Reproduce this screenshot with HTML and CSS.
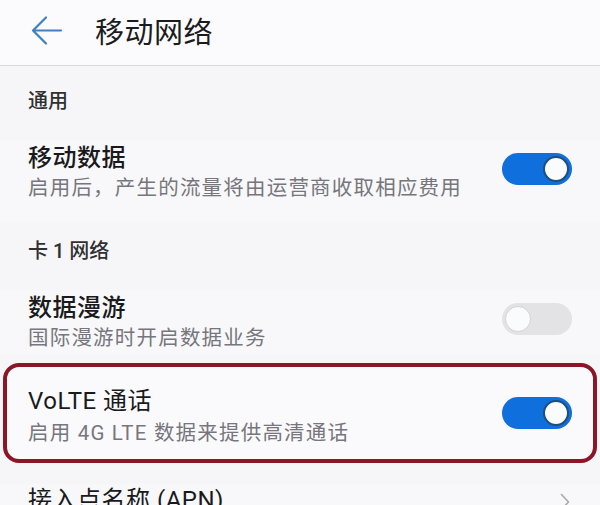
FILE: index.html
```html
<!DOCTYPE html>
<html lang="zh-CN">
<head>
<meta charset="utf-8">
<title>移动网络</title>
<link rel="stylesheet" href="styles.css">
</head>
<body>
<header class="header">
  <svg class="back" width="32" height="32" viewBox="0 0 32 32" aria-hidden="true">
    <path d="M30 15.5H2.5M15 2.5L2 15.5L15 28.5" fill="none" stroke="#3f7fc4" stroke-width="2.2" stroke-linecap="round" stroke-linejoin="round"/>
  </svg>
  <h1 class="title">移动网络</h1>
</header>
<main class="list">
  <div class="label label-first">通用</div>
  <div class="item item-first">
    <div class="texts">
      <div class="item-title">移动数据</div>
      <div class="item-sub">启用后，产生的流量将由运营商收取相应费用</div>
    </div>
    <span class="toggle on"><span class="knob"></span></span>
  </div>
  <div class="label label-second">卡 1 网络</div>
  <div class="item">
    <div class="texts">
      <div class="item-title">数据漫游</div>
      <div class="item-sub">国际漫游时开启数据业务</div>
    </div>
    <span class="toggle off"><span class="knob"></span></span>
  </div>
  <div class="item highlight">
    <div class="texts">
      <div class="item-title latin">VoLTE 通话</div>
      <div class="item-sub">启用 4G LTE 数据来提供高清通话</div>
    </div>
    <span class="toggle on"><span class="knob"></span></span>
  </div>
  <div class="item apn">
    <div class="item-title latin">接入点名称 (APN)</div>
    <svg class="chev" width="10" height="18" viewBox="0 0 10 18" aria-hidden="true">
      <path d="M1.5 1.5L8.5 9L1.5 16.5" fill="none" stroke="#a9a9ad" stroke-width="1.6" stroke-linecap="round" stroke-linejoin="round"/>
    </svg>
  </div>
</main>
</body>
</html>
```
FILE: styles.css
```css
html, body {
  margin: 0;
  padding: 0;
}
body {
  width: 600px;
  height: 505px;
  overflow: hidden;
  background: #f6f6f8;
  font-family: Roboto, "Noto Sans CJK SC", sans-serif;
  color: #1b1b1d;
}
.header {
  height: 66px;
  box-sizing: border-box;
  background: #fbfbfd;
  border-bottom: 1px solid #d9d9dc;
  display: flex;
  align-items: center;
  padding-left: 31px;
}
.back {
  display: block;
  margin-top: -4px;
}
.title {
  margin: 0 0 0 32px;
  font-size: 29px;
  font-weight: 400;
  letter-spacing: 0.5px;
  line-height: 40px;
  margin-top: -6px;
  color: #1c1c1e;
  font-family: "Noto Sans CJK SC", sans-serif;
}
.list {
  display: flex;
  flex-direction: column;
}
.label {
  font-family: Roboto, "Noto Sans CJK SC", sans-serif;
  font-size: 20px;
  font-weight: 500;
  line-height: 28px;
  color: #303033;
  padding: 0 28px;
}
.label-first {
  padding-top: 21px;
  padding-bottom: 25px;
}
.label-second {
  padding-top: 15px;
  padding-bottom: 25px;
}
.item {
  display: flex;
  align-items: flex-start;
  justify-content: space-between;
  padding: 0 28px;
  background: #f8f8fa;
}
.item-first {
  padding-bottom: 18px;
}
.texts {
  display: flex;
  flex-direction: column;
}
.item-title {
  font-family: "Noto Sans CJK SC", sans-serif;
  font-size: 24px;
  font-weight: 500;
  line-height: 32px;
  letter-spacing: 0.5px;
  color: #1a1a1c;
}
.item-title.latin {
  font-family: Roboto, "Noto Sans CJK SC", sans-serif;
  font-weight: 400;
}
.item-sub {
  font-family: Roboto, "Noto Sans CJK SC", sans-serif;
  font-size: 20.5px;
  line-height: 32px;
  letter-spacing: 1.2px;
  color: #76767c;
}
.toggle {
  position: relative;
  width: 70px;
  height: 32px;
  border-radius: 16px;
  margin-top: 13px;
  flex: none;
  box-sizing: border-box;
}
.toggle.on {
  background: #0f6fdd;
}
.toggle.off {
  background: #e3e3e6;
}
.knob {
  position: absolute;
  top: 3px;
  width: 26px;
  height: 26px;
  border-radius: 50%;
  background: #f9fbfd;
  box-sizing: border-box;
}
.toggle.on .knob {
  right: 3px;
  border: 2px solid #1f4f78;
}
.toggle.off .knob {
  left: 3px;
  border: 1px solid #d4d4d8;
}
.highlight {
  margin: 9px 3px 0;
  border: 4px solid #8c1626;
  border-radius: 16px;
  padding: 18px 21px 10px;
  background: #fafafc;
}
.highlight .toggle {
  margin-top: 12px;
}
.apn {
  margin-top: 21px;
  align-items: center;
  padding-right: 30px;
}
.chev {
  display: block;
  margin-top: 4px;
}
```
